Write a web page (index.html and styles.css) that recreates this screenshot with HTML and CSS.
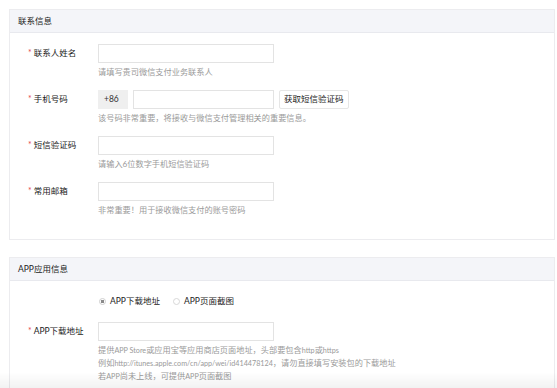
FILE: index.html
```html
<!DOCTYPE html>
<html lang="zh-CN">
<head>
  <meta charset="UTF-8" />
  <title>商户资料</title>
  <link rel="stylesheet" href="styles.css">
</head>
<body>
  <main class="page">
    <section class="card card-contact">
      <div class="card-head">联系信息</div>
      <div class="card-body">
        <div class="row">
          <label class="label"><span class="req">*</span>联系人姓名</label>
          <div class="field">
            <div class="controls"><input class="input" type="text"></div>
            <p class="hint">请填写贵司微信支付业务联系人</p>
          </div>
        </div>

        <div class="row">
          <label class="label"><span class="req">*</span>手机号码</label>
          <div class="field">
            <div class="controls">
              <span class="prefix">+86</span>
              <input class="input input-short" type="text">
              <button class="btn" type="button">获取短信验证码</button>
            </div>
            <p class="hint">该号码非常重要，将接收与微信支付管理相关的重要信息。</p>
          </div>
        </div>

        <div class="row">
          <label class="label"><span class="req">*</span>短信验证码</label>
          <div class="field">
            <div class="controls"><input class="input" type="text"></div>
            <p class="hint">请输入6位数字手机短信验证码</p>
          </div>
        </div>

        <div class="row">
          <label class="label"><span class="req">*</span>常用邮箱</label>
          <div class="field">
            <div class="controls"><input class="input" type="text"></div>
            <p class="hint">非常重要！用于接收微信支付的账号密码</p>
          </div>
        </div>
      </div>
    </section>

    <section class="card card-app">
      <div class="card-head">APP应用信息</div>
      <div class="card-body">
        <div class="radios">
          <span class="radio checked">APP下载地址</span>
          <span class="radio">APP页面截图</span>
        </div>

        <div class="row">
          <label class="label"><span class="req">*</span>APP下载地址</label>
          <div class="field">
            <div class="controls"><input class="input" type="text"></div>
            <p class="hint">提供<span class="en">APP Store</span>或应用宝等应用商店页面地址，头部要包含<span class="en">http</span>或<span class="en">https</span></p>
            <p class="hint">例如<span class="en">http://itunes.apple.com/cn/app/wei/id414478124</span>，请勿直接填写安装包的下载地址</p>
            <p class="hint">若<span class="en">APP</span>尚未上线，可提供<span class="en">APP</span>页面截图</p>
          </div>
        </div>
      </div>
    </section>
  </main>
  <div class="bottom-shade"></div>
</body>
</html>
```

FILE: styles.css
```css
body {
  margin: 0;
  background: #ffffff;
  color: #333;
  font-family: Lato, "Noto Sans CJK SC", sans-serif;
  font-size: 8.5px;
  overflow: hidden;
}

.page {
  padding: 9px 2px 0 9px;
}

.card {
  border: 1px solid #ececef;
  background: #fff;
}

.card-app {
  margin-top: 17px;
}

.card-head {
  height: 22px;
  line-height: 22px;
  padding-left: 8px;
  background: #f4f5f9;
  border-bottom: 1px solid #e8e9ee;
  color: #222;
}

.card-body {
  padding: 11px 0 11px;
}

.row {
  display: flex;
  margin-bottom: 11px;
}

.label {
  width: 88px;
  box-sizing: border-box;
  padding-left: 18px;
  height: 19px;
  line-height: 19px;
  color: #222;
}

.req {
  color: #e5484d;
  margin-right: 2px;
}

.controls {
  display: flex;
  gap: 5px;
}

.input {
  width: 176px;
  height: 19px;
  box-sizing: border-box;
  margin: 0;
  border: 1px solid #e3e3e3;
  background: #fff;
  outline: none;
}

.input-short {
  width: 141px;
}

.prefix {
  width: 30px;
  height: 19px;
  line-height: 19px;
  padding-left: 6px;
  box-sizing: border-box;
  background: #efefef;
  color: #333;
}

.btn {
  height: 19px;
  padding: 0 4px;
  margin: 0;
  border: 1px solid #e6e6e6;
  border-radius: 2px;
  background: #fff;
  color: #222;
  font-family: inherit;
  font-size: 8.5px;
  line-height: 17px;
}

.hint {
  margin: 0;
  color: #9a9a9a;
  font-size: 8.2px;
  line-height: 13px;
}

.hint .en {
  font-size: 7.2px;
}

.controls + .hint {
  margin-top: 3px;
}

.radios {
  display: flex;
  gap: 13px;
  padding-left: 89px;
  height: 14px;
  line-height: 14px;
  margin: 2px 0 14px;
}

.radio {
  display: flex;
  align-items: center;
  gap: 4px;
  color: #222;
}

.radio::before {
  content: '';
  width: 7px;
  height: 7px;
  border: 1px solid #d8d8d8;
  border-radius: 50%;
  box-sizing: border-box;
  background: #fff;
}

.radio.checked::before {
  border-color: #cfcfcf;
  background: radial-gradient(circle, #8a8a8a 0 1.6px, #fff 2px);
}

.bottom-shade {
  position: fixed;
  left: 0;
  right: 0;
  bottom: 0;
  height: 16px;
  background: linear-gradient(to bottom, rgba(0,0,0,0), rgba(0,0,0,0.05));
  pointer-events: none;
}
```
